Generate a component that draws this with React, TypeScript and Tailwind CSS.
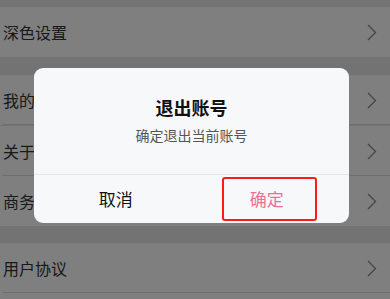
import React from "react";

const Chevron = () => (
  <svg width="10" height="17" viewBox="0 0 10 17" fill="none">
    <path d="M1 1l7.5 7.5L1 16" stroke="#888" strokeWidth="1.3" />
  </svg>
);

const Row = ({ label, divider }: { label: string; divider?: boolean }) => (
  <div className="h-[50px] bg-white flex items-center justify-between pl-[3px] pr-[13px] relative">
    <span className="text-[16px] text-[#333]">{label}</span>
    <Chevron />
    {divider && <div className="absolute left-[3px] right-0 bottom-0 h-px bg-[#dcdcdc]" />}
  </div>
);

export default function App() {
  return (
    <div
      className="relative w-[390px] h-[299px] overflow-hidden bg-[#e6e6e6]"
      style={{ fontFamily: '"Noto Sans CJK SC", "Noto Sans", sans-serif' }}
    >
      <div className="flex flex-col">
        <div className="h-[7px]" />
        <Row label="深色设置" />
        <div className="h-[18px]" />
        <Row label="我的订单" divider />
        <div className="h-px" />
        <Row label="关于我们" divider />
        <Row label="商务合作" />
        <div className="h-[17px]" />
        <Row label="用户协议" divider />
        <div className="h-[20px] bg-white" />
      </div>
      <div className="absolute inset-0 bg-black/50 pt-[68px] pl-[34px]">
        <div className="w-[315px] h-[155px] bg-[#f7f8fa] rounded-[9px] flex flex-col overflow-hidden">
          <div className="h-[106px] flex flex-col items-center">
            <div className="mt-[26px] text-[18px] font-bold leading-[27px] text-[#111]">退出账号</div>
            <div className="mt-[4px] text-[14px] leading-[20px] text-[#555]">确定退出当前账号</div>
          </div>
          <div className="h-px bg-[#e5e6e8]" />
          <div className="flex-1 flex">
            <div className="flex-1 flex items-center justify-center pl-[4px] text-[17px] text-[#111]">取消</div>
            <div className="flex-1 flex items-center justify-center">
              <div className="w-[95px] h-[44px] border-2 border-[#ff1a1a] rounded-[3px] flex items-center justify-center pr-[6px] text-[17px] text-[#eb6f96] -ml-[3px]">
                确定
              </div>
            </div>
          </div>
        </div>
      </div>
    </div>
  );
}
